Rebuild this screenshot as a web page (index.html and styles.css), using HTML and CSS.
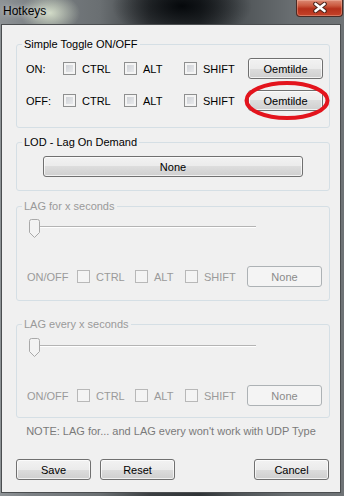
FILE: index.html
```html
<!DOCTYPE html>
<html lang="en">
<head>
  <meta charset="UTF-8">
  <title>Hotkeys</title>
  <link rel="stylesheet" href="styles.css">
</head>
<body>

  <div class="window">
    <div class="titlebar">
      <span class="title">Hotkeys</span>
      <span class="close">
        <svg width="14" height="11" viewBox="0 0 14 11">
          <path d="M2.5 2 L11.5 9 M11.5 2 L2.5 9" stroke="#4a2219" stroke-width="4.6" stroke-linecap="round"/>
          <path d="M2.5 2 L11.5 9 M11.5 2 L2.5 9" stroke="#fff" stroke-width="2.6" stroke-linecap="round"/>
        </svg>
      </span>
    </div>

    <div class="client">
      <fieldset class="group group-toggle">
        <legend>Simple Toggle ON/OFF</legend>
        <div class="row">
          <span class="row-label">ON:</span>
          <label class="check c1"><input type="checkbox">CTRL</label>
          <label class="check c2"><input type="checkbox">ALT</label>
          <label class="check c3"><input type="checkbox">SHIFT</label>
          <button class="btn">Oemtilde</button>
        </div>
        <div class="row">
          <span class="row-label">OFF:</span>
          <label class="check c1"><input type="checkbox">CTRL</label>
          <label class="check c2"><input type="checkbox">ALT</label>
          <label class="check c3"><input type="checkbox">SHIFT</label>
          <button class="btn">Oemtilde</button>
        </div>
      </fieldset>

      <fieldset class="group group-lod">
        <legend>LOD - Lag On Demand</legend>
        <button class="btn btn-wide">None</button>
      </fieldset>

      <fieldset class="group group-lag disabled" disabled>
        <legend>LAG for x seconds</legend>
        <div class="slider">
          <svg width="11" height="19" viewBox="0 0 11 19">
            <path d="M0.5 2.5 Q0.5 0.5 2.5 0.5 H8.5 Q10.5 0.5 10.5 2.5 V13.5 L5.5 18.5 L0.5 13.5 Z" fill="#f3f3f3" stroke="#a9a9a9"/>
          </svg>
        </div>
        <div class="row">
          <span class="row-label">ON/OFF</span>
          <label class="check d1"><input type="checkbox" disabled>CTRL</label>
          <label class="check d2"><input type="checkbox" disabled>ALT</label>
          <label class="check d3"><input type="checkbox" disabled>SHIFT</label>
          <button class="btn" disabled>None</button>
        </div>
      </fieldset>

      <fieldset class="group group-every disabled" disabled>
        <legend>LAG every x seconds</legend>
        <div class="slider">
          <svg width="11" height="19" viewBox="0 0 11 19">
            <path d="M0.5 2.5 Q0.5 0.5 2.5 0.5 H8.5 Q10.5 0.5 10.5 2.5 V13.5 L5.5 18.5 L0.5 13.5 Z" fill="#f3f3f3" stroke="#a9a9a9"/>
          </svg>
        </div>
        <div class="row">
          <span class="row-label">ON/OFF</span>
          <label class="check d1"><input type="checkbox" disabled>CTRL</label>
          <label class="check d2"><input type="checkbox" disabled>ALT</label>
          <label class="check d3"><input type="checkbox" disabled>SHIFT</label>
          <button class="btn" disabled>None</button>
        </div>
      </fieldset>

      <p class="note">NOTE: LAG for... and LAG every won't work with UDP Type</p>

      <div class="actions">
        <button class="btn">Save</button>
        <button class="btn">Reset</button>
        <button class="btn btn-cancel">Cancel</button>
      </div>
    </div>

    <svg class="mark" width="88" height="42" viewBox="0 0 88 42">
      <ellipse cx="44" cy="20.5" rx="40.5" ry="17.5" fill="none" stroke="#e3141d" stroke-width="4"/>
    </svg>
  </div>

</body>
</html>
```

FILE: styles.css
```css
* {
  box-sizing: border-box;
}

body {
  margin: 0;
  font-family: 'Liberation Sans', Arial, sans-serif;
  font-size: 11px;
  color: #000;
}

.window {
  position: relative;
  width: 344px;
  height: 496px;
  padding: 0 3px 3px 1px;
  display: flex;
  flex-direction: column;
  background:
    radial-gradient(ellipse 30px 20px at 50px 13px, rgba(226, 236, 212, 0.85), rgba(226, 236, 212, 0)),
    radial-gradient(ellipse 70px 34px at 182px 6px, #05080b, rgba(5, 8, 11, 0)),
    linear-gradient(to right, #8e9396 0, #7d8286 30px, #6a6f72 100px, #3b3f42 150px, #303437 200px, #4f5457 240px, #686d70 290px, #6f7376 344px);
  background-color: #5e6265;
}

.titlebar {
  height: 24px;
  display: flex;
  justify-content: space-between;
  align-items: flex-start;
}

.title {
  margin: 4px 0 0 2px;
  font-size: 12px;
  line-height: 14px;
  text-shadow: 0 0 6px rgba(255, 255, 255, 0.8);
}

.close {
  width: 47px;
  height: 17px;
  margin-right: -2px;
  display: flex;
  justify-content: center;
  padding-top: 2px;
  border: 1px solid #4b2a24;
  border-top: none;
  border-radius: 0 0 4px 4px;
  background: linear-gradient(to bottom, #dc8a74 0, #cb5a40 35%, #b5301a 55%, #c4432a 100%);
  box-shadow: inset 0 0 0 1px rgba(255, 210, 190, 0.35);
}

.client {
  flex: 1;
  background: #f0f0f0;
  border: 1px solid #4b4e50;
}

.group {
  width: 314px;
  margin: 0 0 0 14px;
  padding: 0 0 0 9px;
  border: 1px solid #d5dfe5;
  border-radius: 3px;
  min-width: 0;
}

.group legend {
  font-size: 11px;
  line-height: 13px;
  padding: 0 2px;
  margin-left: -4px;
}

.group-toggle {
  margin-top: 13px;
  padding-top: 7px;
  padding-bottom: 16px;
  display: flex;
  flex-direction: column;
  gap: 11px;
}

.group-lod {
  margin-top: 8px;
  padding-top: 7px;
  padding-bottom: 13px;
}

.group-lag {
  margin-top: 9px;
  padding-top: 6px;
  padding-bottom: 13px;
}

.group-every {
  margin-top: 17px;
  padding-top: 7px;
  padding-bottom: 11px;
}

.row {
  display: flex;
  align-items: center;
  height: 21px;
}

.row-label {
  width: 37px;
}

.disabled .row-label {
  width: 50px;
  margin-left: 1px;
}

.disabled legend,
.disabled .row-label,
.disabled .check {
  color: #9a9a9a;
}

.check {
  display: flex;
  align-items: center;
  gap: 6px;
}

.c1 { width: 61px; }
.c2 { width: 60px; }
.c3 { width: 64px; }
.d1 { width: 58px; }
.d2 { width: 50px; }
.d3 { width: 62px; }

.check input {
  appearance: none;
  width: 13px;
  height: 13px;
  margin: 0;
  border: 1px solid #8e8f8f;
  background: linear-gradient(135deg, #c9ccd1, #eeeff1);
  box-shadow: inset 0 0 0 2px #f4f4f4;
}

.check input:disabled {
  border-color: #b8b8b8;
  background: #f4f4f4;
  box-shadow: none;
}

.btn {
  width: 75px;
  height: 21px;
  padding: 0;
  font-family: inherit;
  font-size: 11px;
  color: #000;
  border: 1px solid #707070;
  border-radius: 3px;
  background: linear-gradient(to bottom, #f2f2f2 0, #ebebeb 50%, #dddddd 50%, #cfcfcf 100%);
  box-shadow: inset 0 0 0 1px rgba(255, 255, 255, 0.7);
}

.btn:disabled {
  color: #8a8a8a;
  border-color: #adb2b5;
  background: #f4f4f4;
  box-shadow: none;
}

.btn-wide {
  display: block;
  width: 260px;
  margin-left: 17px;
}

.slider {
  width: 227px;
  height: 19px;
  margin-left: 3px;
  margin-bottom: 28px;
  background: linear-gradient(to bottom, transparent 7px, #b4b4b4 7px, #b4b4b4 8px, #fff 8px, #fff 9px, transparent 9px);
}

.slider svg {
  display: block;
}

.note {
  margin: 7px 0 0;
  text-align: center;
  line-height: 13px;
  color: #7a7a7a;
}

.actions {
  display: flex;
  gap: 9px;
  margin: 21px 11px 0 14px;
}

.btn-cancel {
  margin-left: auto;
}

.mark {
  position: absolute;
  left: 243px;
  top: 80px;
}
```
